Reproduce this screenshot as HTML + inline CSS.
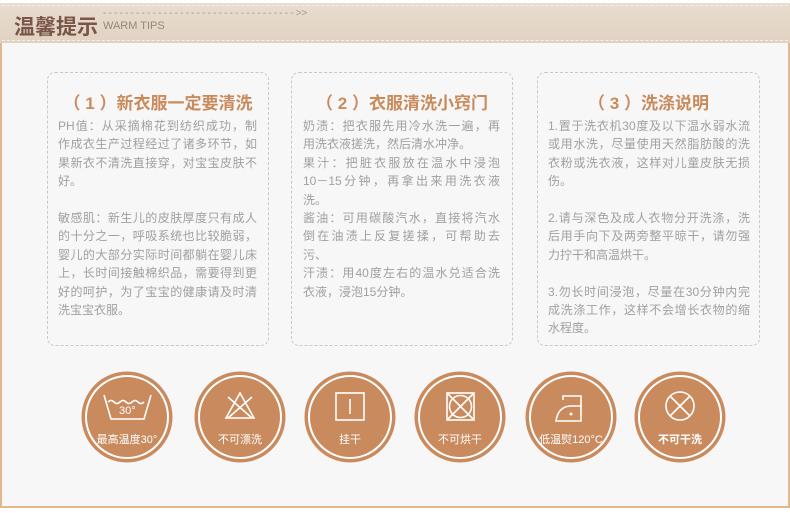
<!DOCTYPE html>
<html><head><meta charset="utf-8"><style>
*{margin:0;padding:0;box-sizing:border-box}
body{width:790px;height:513px;background:#fff;position:relative;overflow:hidden;font-family:"Liberation Sans","Noto Sans CJK SC",sans-serif}
.hdr{position:absolute;left:0;top:3px;width:790px;height:40px;background:linear-gradient(#e8ddd0,#e0d2c1)}
.hdr .d1{position:absolute;left:2px;right:2px;top:2px;border-top:1px dashed #f7efe6}
.hdr .d2{position:absolute;left:2px;right:2px;bottom:2px;border-top:1px dashed #f7efe6}
.hdr .t{position:absolute;left:14px;top:8px;font-size:21px;color:#7a5548;font-weight:bold;letter-spacing:0px}
.hdr .e{position:absolute;left:103px;top:17px;font-size:11px;color:#9a8578}
.hdr .ar{position:absolute;left:103px;top:5px;font-size:10px;color:#a8968a;letter-spacing:-0.3px}
.panel{position:absolute;left:0;top:43px;width:790px;height:465px;background:#f7f7f8;border-left:2px solid #e3b98c;border-right:2px solid #e3b98c;border-bottom:2px solid #e3b98c}
.box{position:absolute;top:72px;height:274px;border:1px dashed #c8c8c8;border-radius:8px}
.tx{position:absolute;font-size:12px;color:#a0a0a0;line-height:18.4px}
.tx div{text-align:justify;text-align-last:justify;white-space:nowrap;height:18.4px}
.tx div.l{text-align-last:left}
.lb{position:absolute;width:100px;text-align:center;color:#fff;font-size:11px;top:431px}
.ti{position:absolute;top:89px;text-align:center;font-size:17px;color:#c98a5c;font-weight:bold}
</style></head><body>
<div class="hdr"><div class="d1"></div><div class="d2"></div>
<div class="t">温馨提示</div><div class="ar">- - - - - - - - - - - - - - - - - - - - - - - - - - - - - - - - - - - &gt;&gt;</div><div class="e">WARM TIPS</div></div>
<div class="panel"></div>

<div class="box" style="left:47px;width:222px"></div>
<div class="box" style="left:291px;width:222px"></div>
<div class="box" style="left:537px;width:223px"></div>
<div class="ti" style="left:47px;width:222px">（ 1 ）新衣服一定要清洗</div>
<div class="ti" style="left:291px;width:222px">（ 2 ）衣服清洗小窍门</div>
<div class="ti" style="left:537px;width:223px">（ 3 ）洗涤说明</div>

<div class="tx" style="left:58px;width:199px;top:117px">
<div>PH值：从采摘棉花到纺织成功，制</div><div>作成衣生产过程经过了诸多环节，如</div><div>果新衣不清洗直接穿，对宝宝皮肤不</div><div class="l">好。</div><div class="l"></div>
<div>敏感肌：新生儿的皮肤厚度只有成人</div><div>的十分之一，呼吸系统也比较脆弱，</div><div>婴儿的大部分实际时间都躺在婴儿床</div><div>上，长时间接触棉织品，需要得到更</div><div>好的呵护，为了宝宝的健康请及时清</div><div class="l">洗宝宝衣服。</div>
</div>
<div class="tx" style="left:303px;width:197px;top:117px;line-height:18.3px">
<div>奶渍：把衣服先用冷水洗一遍，再</div><div class="l">用洗衣液搓洗，然后清水冲净。</div><div>果汁：把脏衣服放在温水中浸泡</div><div>10－15分钟，再拿出来用洗衣液</div><div class="l">洗。</div><div>酱油：可用碳酸汽水，直接将汽水</div><div>倒在油渍上反复搓揉，可帮助去</div><div class="l">污、</div><div>汗渍：用40度左右的温水兑适合洗</div><div class="l">衣液，浸泡15分钟。</div>
</div>
<div class="tx" style="left:548px;width:202px;top:117px;line-height:18.3px">
<div>1.置于洗衣机30度及以下温水弱水流</div><div>或用水洗，尽量使用天然脂肪酸的洗</div><div>衣粉或洗衣液，这样对儿童皮肤无损</div><div class="l">伤。</div><div class="l"></div>
<div>2.请与深色及成人衣物分开洗涤，洗</div><div>后用手向下及两旁整平晾干，请勿强</div><div class="l">力拧干和高温烘干。</div><div class="l"></div>
<div>3.勿长时间浸泡，尽量在30分钟内完</div><div>成洗涤工作，这样不会增长衣物的缩</div><div class="l">水程度。</div>
</div>

<svg style="position:absolute;left:0;top:0" width="790" height="513">
<g fill="#c98a5e" stroke="#fff" stroke-width="2">
<circle cx="127" cy="417" r="45.5" stroke="none"/><circle cx="127" cy="417" r="41"/>
<circle cx="240" cy="417" r="45.5" stroke="none"/><circle cx="240" cy="417" r="41"/>
<circle cx="350" cy="417" r="45.5" stroke="none"/><circle cx="350" cy="417" r="41"/>
<circle cx="460" cy="417" r="45.5" stroke="none"/><circle cx="460" cy="417" r="41"/>
<circle cx="571" cy="417" r="45.5" stroke="none"/><circle cx="571" cy="417" r="41"/>
<circle cx="680" cy="417" r="45.5" stroke="none"/><circle cx="680" cy="417" r="41"/>
</g>
<g fill="none" stroke="#fff" stroke-width="1.6">
<path d="M104 395 L111 419 L144 419 L151 395"/>
<path d="M108 402 q3 -3 6 0 t6 0 t6 0 t6 0 t6 0 t6 0"/>
<path d="M240 393 L226 418 L254 418 Z"/><path d="M228 397 L252 418 M252 397 L228 418"/>
<rect x="336" y="393" width="28" height="27"/><path d="M350 399 V414"/>
<rect x="447" y="393" width="27" height="27"/><circle cx="460.5" cy="406.5" r="11"/><path d="M447 393 L474 420 M474 393 L447 420"/>
<path d="M563 400 V396 H581 V421 H556 Q558 407 570 406 H581"/>
<circle cx="680" cy="406" r="14"/><path d="M670 396 L690 416 M690 396 L670 416"/>
</g>
<circle cx="571" cy="414" r="1.5" fill="#fff"/>
<text x="119" y="414" fill="#fff" font-size="11" font-family="Liberation Sans">30°</text>
</svg>
<div class="lb" style="left:77px">最高温度30°</div>
<div class="lb" style="left:190px">不可漂洗</div>
<div class="lb" style="left:300px">挂干</div>
<div class="lb" style="left:410px">不可烘干</div>
<div class="lb" style="left:521px">低温熨120°C</div>
<div class="lb" style="left:630px;font-weight:bold">不可干洗</div>
</body></html>
